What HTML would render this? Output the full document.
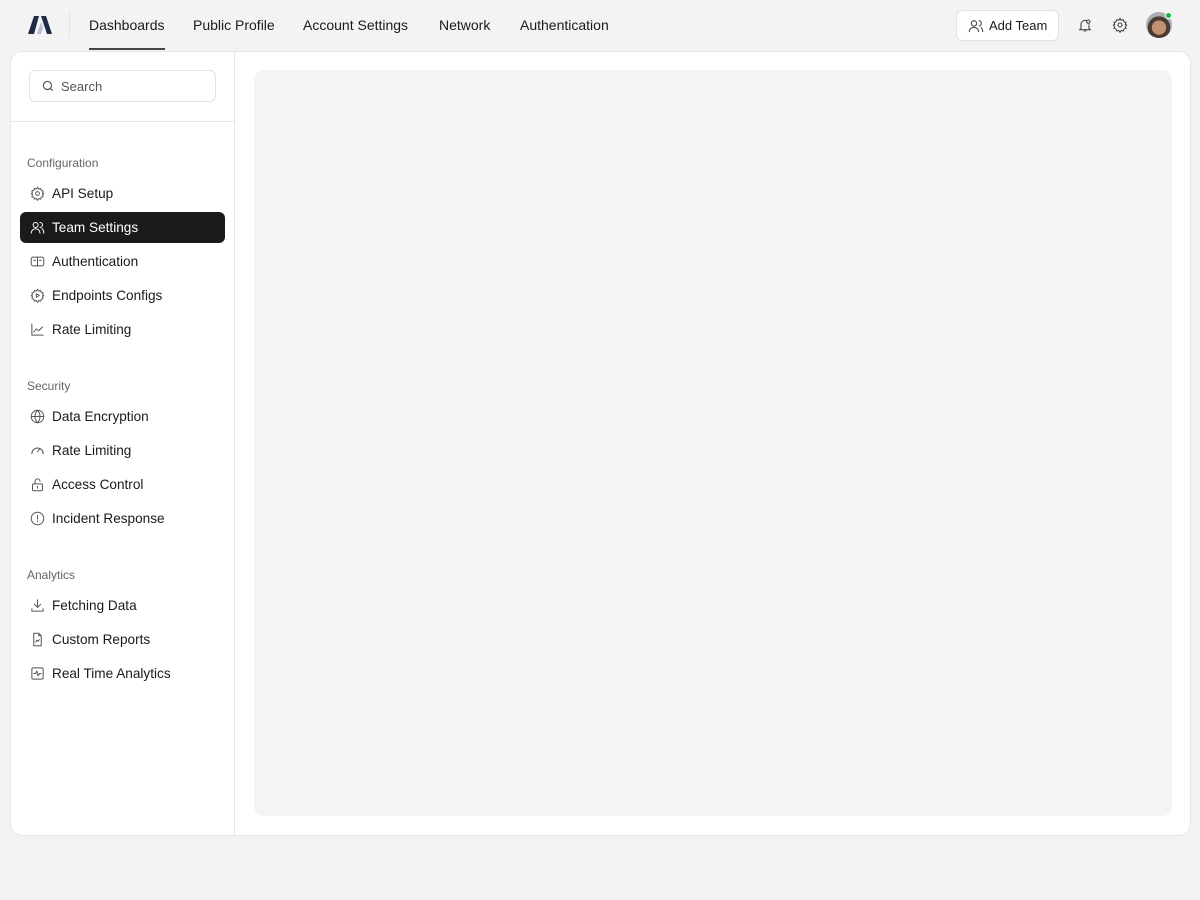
<!DOCTYPE html>
<html><head><meta charset="utf-8"><style>
*{box-sizing:border-box;margin:0;padding:0}
body{width:1200px;height:900px;background:#f3f3f3;font-family:"Liberation Sans",sans-serif;color:#111;position:relative;overflow:hidden}
.abs{position:absolute}
.nav a{position:absolute;top:17px;font-size:14px;color:#1a1a1a;text-decoration:none}
.card{left:10px;top:51px;width:1181px;height:785px;background:#fff;border:1px solid #e6e6e9;border-radius:12px}
.side{left:0;top:0;width:224px;height:100%;border-right:1px solid #e6e6e9}
.sh{position:absolute;left:16px;font-size:12px;color:#666}
.it{position:absolute;left:9px;width:205px;height:31px;border-radius:6px;font-size:13.6px;color:#1a1a1a;display:flex;align-items:center;padding-left:10px}
.it svg{width:15px;height:15px;margin-right:7px;fill:none;stroke:#555;stroke-width:1.6;stroke-linecap:round;stroke-linejoin:round}
.it.on{background:#1b1b1b;color:#fff}
.it.on svg{stroke:#fff}
</style></head><body>
<svg class="abs" style="left:28px;top:16px" width="24" height="18" viewBox="0 0 24 18"><path d="M0 18L6 0h5L6 18z" fill="#1f2a44"/><path d="M9 18l4-12 2 6-2 6z" fill="#b8bfd0"/><path d="M13 0h5l6 18h-5z" fill="#1f2a44"/></svg>
<div class="abs" style="left:69px;top:12px;width:1px;height:26px;background:#e3e3e3"></div>
<div class="nav">
<a style="left:89px">Dashboards</a><a style="left:193px">Public Profile</a><a style="left:303px">Account Settings</a><a style="left:439px">Network</a><a style="left:520px">Authentication</a>
</div>
<div class="abs" style="left:89px;top:48px;width:76px;height:2px;background:#444"></div>
<div class="abs" style="left:956px;top:10px;width:103px;height:31px;background:#fff;border:1px solid #e2e2e2;border-radius:6px;font-size:13px;display:flex;align-items:center;padding-left:11px;color:#1a1a1a">
<svg width="16" height="16" viewBox="0 0 24 24" fill="none" stroke="#444" stroke-width="1.6" style="margin-right:5px"><circle cx="9" cy="8" r="4"/><path d="M2 21c0-4 3-7 7-7s7 3 7 7M16 4a4 4 0 010 8M19 14c2 1 3 4 3 7"/></svg>Add Team</div>
<svg class="abs" style="left:1077px;top:17px" width="16" height="16" viewBox="0 0 24 24" fill="none" stroke="#444" stroke-width="1.6"><path d="M6 17V11a6 6 0 019-5M18 11v6l2 2H4l2-2M10 21h4"/><circle cx="17" cy="7" r="2.5"/></svg>
<svg class="abs" style="left:1112px;top:17px" width="16" height="16" viewBox="0 0 24 24" fill="none" stroke="#444" stroke-width="1.6"><circle cx="12" cy="12" r="3"/><path d="M12 2l2 3 3-1 1 3 3 1-1 3 2 1-2 2 1 3-3 1-1 3-3-1-2 3-2-3-3 1-1-3-3-1 1-3-2-2 2-1-1-3 3-1 1-3 3 1z"/></svg>
<div class="abs" style="left:1146px;top:12px;width:26px;height:26px;border-radius:50%;background:radial-gradient(circle at 50% 60%,#c09070 0 35%,#4a3a30 36% 55%,#a8adb2 56%)"></div>
<div class="abs" style="left:1165px;top:12px;width:7px;height:7px;border-radius:50%;background:#1db34a;border:1px solid #fff"></div>

<div class="abs card">
<div class="abs side">
<div class="abs" style="left:18px;top:18px;width:187px;height:32px;border:1px solid #e2e2e2;border-radius:6px;display:flex;align-items:center;padding-left:11px;font-size:13px;color:#555">
<svg width="14" height="14" viewBox="0 0 24 24" fill="none" stroke="#555" stroke-width="2" style="margin-right:6px"><circle cx="11" cy="11" r="7"/><path d="M20 20l-4-4"/></svg>Search</div>
<div class="abs" style="left:0;top:69px;width:223px;height:1px;background:#e6e6e9"></div>
<div class="sh" style="top:104px">Configuration</div>
<div class="it" style="top:126px"><svg viewBox="0 0 24 24"><circle cx="12" cy="12" r="3"/><path d="M12 2l2 3 3-1 1 3 3 1-1 3 2 1-2 2 1 3-3 1-1 3-3-1-2 3-2-3-3 1-1-3-3-1 1-3-2-2 2-1-1-3 3-1 1-3 3 1z"/></svg>API Setup</div>
<div class="it on" style="top:160px"><svg viewBox="0 0 24 24"><circle cx="9" cy="8" r="4"/><path d="M2 21c0-4 3-7 7-7s7 3 7 7M16 4a4 4 0 010 8M19 14c2 1 3 4 3 7"/></svg>Team Settings</div>
<div class="it" style="top:194px"><svg viewBox="0 0 24 24"><rect x="2" y="5" width="20" height="14" rx="3"/><path d="M12 5v14M6 10h3M15 10h3"/></svg>Authentication</div>
<div class="it" style="top:228px"><svg viewBox="0 0 24 24"><path d="M12 2l2 3 3-1 1 3 3 1-1 3 2 1-2 2 1 3-3 1-1 3-3-1-2 3-2-3-3 1-1-3-3-1 1-3-2-2 2-1-1-3 3-1 1-3 3 1z"/><path d="M10 9l5 3-5 3z"/></svg>Endpoints Configs</div>
<div class="it" style="top:262px"><svg viewBox="0 0 24 24"><path d="M3 3v18h18M6 16l4-5 4 3 6-6"/></svg>Rate Limiting</div>
<div class="sh" style="top:327px">Security</div>
<div class="it" style="top:349px"><svg viewBox="0 0 24 24"><circle cx="12" cy="12" r="10"/><path d="M2 12h20M12 2c3 3 4 6 4 10s-1 7-4 10c-3-3-4-6-4-10s1-7 4-10"/></svg>Data Encryption</div>
<div class="it" style="top:383px"><svg viewBox="0 0 24 24"><path d="M3 17a9 9 0 0118 0M12 14l4-5"/></svg>Rate Limiting</div>
<div class="it" style="top:417px"><svg viewBox="0 0 24 24"><rect x="4" y="11" width="16" height="11" rx="2"/><path d="M8 11V7a4 4 0 018 0M12 15v3"/></svg>Access Control</div>
<div class="it" style="top:451px"><svg viewBox="0 0 24 24"><circle cx="12" cy="12" r="10"/><path d="M12 7v6M12 16v1"/></svg>Incident Response</div>
<div class="sh" style="top:516px">Analytics</div>
<div class="it" style="top:538px"><svg viewBox="0 0 24 24"><path d="M12 3v12M7 10l5 5 5-5M3 17v4h18v-4"/></svg>Fetching Data</div>
<div class="it" style="top:572px"><svg viewBox="0 0 24 24"><path d="M14 2H6v20h12V6zM14 2v4h4M9 16l2-3 2 2 2-3"/></svg>Custom Reports</div>
<div class="it" style="top:606px"><svg viewBox="0 0 24 24"><rect x="3" y="3" width="18" height="18" rx="2"/><path d="M6 12h3l2-4 2 8 2-4h3"/></svg>Real Time Analytics</div>
</div>
<div class="abs" style="left:243px;top:18px;width:918px;height:746px;background:#f4f4f4;border-radius:10px"></div>
</div>
</body></html>
